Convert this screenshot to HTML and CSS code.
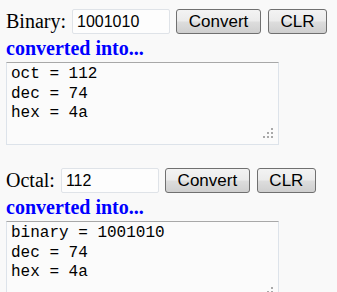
FILE: index.html
```html
<!DOCTYPE html>
<html>
<head>
<meta charset="utf-8">
<link rel="stylesheet" href="styles.css">
</head>
<body>
<section class="conv conv-first">
  <div class="row">
    <label class="label label-bin">Binary:</label>
    <input class="field" type="text" value="1001010">
    <button class="btn btn-convert">Convert</button>
    <button class="btn btn-clr">CLR</button>
  </div>
  <div class="heading">converted into...</div>
  <div class="box">
    <textarea class="out">oct = 112
dec = 74
hex = 4a</textarea>
    <svg class="grip" width="12" height="12" viewBox="0 0 12 12"><rect x="8" y="0" width="2" height="2"/><rect x="4" y="4" width="2" height="2"/><rect x="8" y="4" width="2" height="2"/><rect x="0" y="8" width="2" height="2"/><rect x="4" y="8" width="2" height="2"/><rect x="8" y="8" width="2" height="2"/></svg>
  </div>
</section>
<section class="conv conv-second">
  <div class="row">
    <label class="label label-oct">Octal:</label>
    <input class="field" type="text" value="112">
    <button class="btn btn-convert">Convert</button>
    <button class="btn btn-clr">CLR</button>
  </div>
  <div class="heading">converted into...</div>
  <div class="box">
    <textarea class="out">binary = 1001010
dec = 74
hex = 4a</textarea>
    <svg class="grip" width="12" height="12" viewBox="0 0 12 12"><rect x="8" y="0" width="2" height="2"/><rect x="4" y="4" width="2" height="2"/><rect x="8" y="4" width="2" height="2"/><rect x="0" y="8" width="2" height="2"/><rect x="4" y="8" width="2" height="2"/><rect x="8" y="8" width="2" height="2"/></svg>
  </div>
</section>
</body>
</html>
```
FILE: styles.css
```css
html, body {
  margin: 0;
  padding: 0;
  background: #f9f9f9;
}
body {
  padding: 9px 0 0 6px;
  font-family: "Liberation Serif", "Times New Roman", serif;
  color: #000;
}
.conv-second {
  margin-top: 23px;
}
.row {
  display: flex;
  align-items: center;
  height: 25px;
}
.label {
  font-size: 20px;
  line-height: 25px;
  margin-right: 6px;
}
.field {
  box-sizing: border-box;
  width: 98px;
  height: 25px;
  margin: 0;
  padding: 0 4px;
  border: 1px solid #dfe3e8;
  border-radius: 2px;
  background: #fdfdfd;
  font-family: "Liberation Sans", Arial, sans-serif;
  font-size: 16px;
  color: #000;
  outline: none;
}
.btn {
  box-sizing: border-box;
  height: 25px;
  margin: 0 0 0 6px;
  padding: 0;
  border: 1px solid #707070;
  border-radius: 3px;
  background: linear-gradient(#f3f3f3 0%, #ebebeb 48%, #dddddd 52%, #cfcfcf 100%);
  font-family: "Liberation Sans", Arial, sans-serif;
  font-size: 17px;
  color: #000;
}
.btn-convert {
  width: 85px;
}
.btn-clr {
  width: 59px;
  margin-left: 7px;
}
.heading {
  font-weight: bold;
  color: #0000ff;
  font-size: 20px;
  line-height: 22px;
  margin-top: 3px;
  height: 24px;
}
.box {
  position: relative;
  width: 273px;
  height: 83px;
  margin-top: 1px;
}
.out {
  box-sizing: border-box;
  display: block;
  width: 273px;
  height: 83px;
  margin: 0;
  padding: 2px 4px;
  border: 1px solid #dde3ea;
  border-top-color: #a8a8a8;
  background: #fbfbfb;
  font-family: "Liberation Mono", "Courier New", monospace;
  font-size: 16px;
  line-height: 19.5px;
  color: #000;
  resize: none;
  overflow: hidden;
  outline: none;
}
.grip {
  position: absolute;
  right: 4px;
  bottom: 5px;
  fill: #a9a9a9;
}
```
